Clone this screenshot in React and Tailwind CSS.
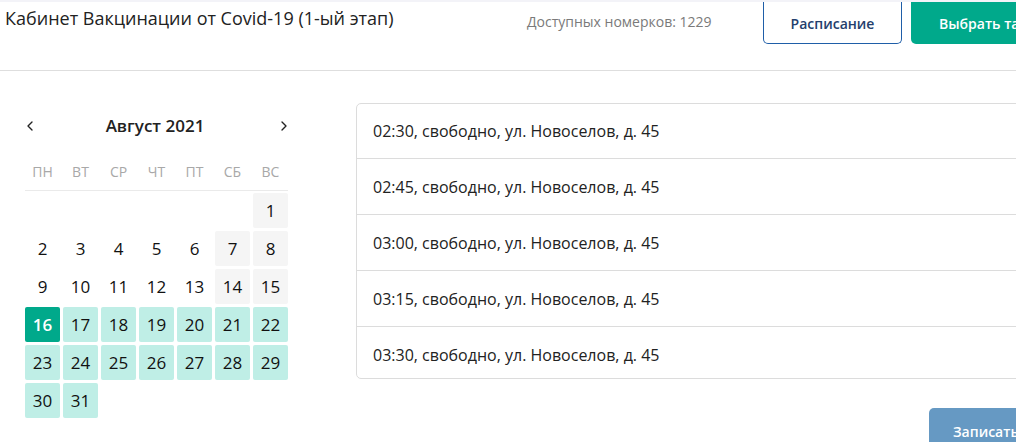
import { ChevronLeft, ChevronRight } from "lucide-react";

const weekDays = ["ПН", "ВТ", "СР", "ЧТ", "ПТ", "СБ", "ВС"];

const slots = ["02:30", "02:45", "03:00", "03:15", "03:30"];

function dayStyle(day, col) {
  if (day === 16) return "bg-[#00a98b] text-white font-semibold";
  if (day > 16) return "bg-[#bfeee6] text-[#111]";
  if (col >= 5) return "bg-[#f5f5f5] text-[#111]";
  return "text-[#111]";
}

function Calendar() {
  // август 2021 начинается с воскресенья
  const cells = [];
  for (let i = 0; i < 6; i++) cells.push(null);
  for (let d = 1; d <= 31; d++) cells.push(d);

  return (
    <div className="w-[263px] shrink-0">
      <div className="flex items-center justify-between h-[22px] mt-[12px]">
        <ChevronLeft className="w-[16px] h-[16px] -ml-[3px] text-[#222]" strokeWidth={2} />
        <span className="text-[17px] font-semibold text-[#222] -ml-[4px]">Август 2021</span>
        <ChevronRight className="w-[16px] h-[16px] -mr-[4px] text-[#222]" strokeWidth={2} />
      </div>
      <div className="grid grid-cols-7 gap-x-[3px] mt-[25px] pb-[8px] border-b border-[#eaeaea]">
        {weekDays.map((w) => (
          <div key={w} className="text-center text-[14px] text-[#a8a8a8] leading-[20px]">
            {w}
          </div>
        ))}
      </div>
      <div className="grid grid-cols-7 gap-[3px] mt-[2px]">
        {cells.map((d, i) =>
          d === null ? (
            <div key={i} className="h-[35px]" />
          ) : (
            <div
              key={i}
              className={`h-[35px] rounded-[2px] flex items-center justify-center text-[17px] font-medium ${dayStyle(d, i % 7)}`}
            >
              {d}
            </div>
          )
        )}
      </div>
    </div>
  );
}

export default function App() {
  return (
    <div
      className="w-[1016px] h-[442px] overflow-hidden bg-white"
      style={{ fontFamily: '"Open Sans", sans-serif' }}
    >
      <div className="h-[2px] bg-[#f3f3f8]" />
      <header className="h-[69px] border-b border-[#dedede] flex items-start whitespace-nowrap">
        <h1 className="shrink-0 pl-[5px] pt-[4px] text-[18px] text-[#222] font-normal leading-[24px] w-[527px]">
          Кабинет Вакцинации от Covid-19 (1-ый этап)
        </h1>
        <span className="shrink-0 pt-[10px] text-[14px] text-[#7a7a7a] leading-[20px] w-[236px]">
          Доступных номерков: 1229
        </span>
        <button className="shrink-0 w-[139px] h-[42px] border border-t-0 border-[#1f5ea8] rounded-b-[5px] text-[14px] font-semibold text-[#24406d] pt-[1px]">
          Расписание
        </button>
        <button className="shrink-0 ml-[9px] w-[160px] h-[42px] bg-[#00a98b] rounded-b-[5px] text-[14px] font-semibold text-white text-left pl-[28px] pt-[1px]">
          Выбрать талон
        </button>
      </header>

      <main className="flex pl-[25px] pt-[32px] gap-[68px]">
        <Calendar />
        <div className="flex flex-col shrink-0">
          <div className="w-[700px] h-[276px] overflow-hidden border border-[#dcdcdc] rounded-[5px] whitespace-nowrap">
            {slots.map((t, i) => (
              <div
                key={t}
                className={`${i === 0 ? "h-[54px]" : "h-[56px] border-t border-[#dcdcdc]"} shrink-0 flex items-center pl-[16px] text-[16px] text-[#222]`}
              >
                {t}, свободно, ул. Новоселов, д. 45
              </div>
            ))}
          </div>
          <div className="flex pl-[573px] mt-[29px] whitespace-nowrap">
            <button className="w-[140px] h-[46px] bg-[#6699c3] rounded-tl-[5px] text-[14px] font-semibold text-white text-left pl-[24px] pt-[1px]">
              Записаться
            </button>
          </div>
        </div>
      </main>
    </div>
  );
}
